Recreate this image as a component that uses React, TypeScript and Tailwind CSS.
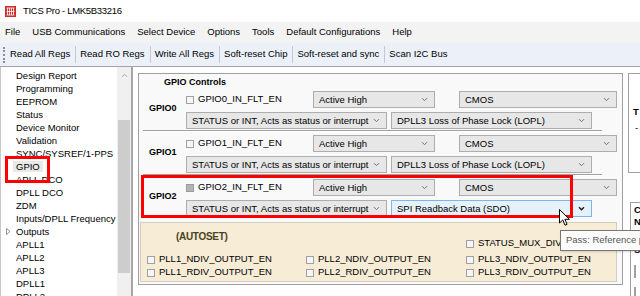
import React from "react";

const Chevron = ({ dark }: { dark?: boolean }) => (
  <svg width="7" height="5" viewBox="0 0 7 5" className="flex-none">
    <path
      d="M1 1.2 L3.5 3.7 L6 1.2"
      fill="none"
      stroke={dark ? "#1a1a1a" : "#707070"}
      strokeWidth={dark ? 1.4 : 1}
    />
  </svg>
);

function Combo({ text, className, hover }: { text: string; className: string; hover?: boolean }) {
  return (
    <div
      className={`${className} h-[17px] flex-none flex items-center justify-between pl-[5px] pr-[6px] border ${
        hover ? "border-[#7eb4ea] bg-[#e5f1fb]" : "border-[#adadad] bg-[#e7e7e7]"
      }`}
    >
      <span className="whitespace-nowrap leading-none">{text}</span>
      <Chevron dark={hover} />
    </div>
  );
}

function Check({ disabled }: { disabled?: boolean }) {
  return (
    <span
      className={`w-[8px] h-[8px] flex-none border ${
        disabled ? "border-[#9c9c9c] bg-[#b3b3b3]" : "border-[#a0a0a0] bg-[#f6f6f6]"
      }`}
    />
  );
}

function GpioGroup({ n, dis, out, hover }: { n: number; dis?: boolean; out: string; hover?: boolean }) {
  return (
    <div className="flex h-[38px]">
      <div className="w-[47px] flex-none flex items-center pl-[10px] pb-[2px] font-bold text-[9px]">GPIO{n}</div>
      <div className="flex flex-col gap-[4px]">
        <div className="flex items-center h-[17px]">
          <div className="w-[127px] flex-none flex items-center gap-[4px]">
            <Check disabled={dis} />
            <span className="whitespace-nowrap">GPIO{n}_IN_FLT_EN</span>
          </div>
          <Combo text="Active High" className="w-[122px]" />
          <Combo text="CMOS" className="w-[158px] ml-[24px]" />
        </div>
        <div className="flex items-center h-[17px]">
          <Combo text="STATUS or INT, Acts as status or interrupt" className="w-[201px]" />
          <Combo text={out} className="w-[201px] ml-[4px]" hover={hover} />
        </div>
      </div>
    </div>
  );
}

const Sep = () => (
  <div className="ml-[4px] w-[459px] h-[2px] border-t border-b border-t-[#a0a0a0] border-b-white mt-[1px] mb-[3px]" />
);

function CheckItem({ label }: { label: string }) {
  return (
    <div className="flex items-center gap-[4px] h-[13px] whitespace-nowrap">
      <Check />
      <span>{label}</span>
    </div>
  );
}

const treeItems = [
  "Design Report",
  "Programming",
  "EEPROM",
  "Status",
  "Device Monitor",
  "Validation",
  "SYNC/SYSREF/1-PPS",
  "GPIO",
  "APLL DCO",
  "DPLL DCO",
  "ZDM",
  "Inputs/DPLL Frequency",
  "Outputs",
  "APLL1",
  "APLL2",
  "APLL3",
  "DPLL1",
  "DPLL2",
];

const menus = ["File", "USB Communications", "Select Device", "Options", "Tools", "Default Configurations", "Help"];
const tools = ["Read All Regs", "Read RO Regs", "Write All Regs", "Soft-reset Chip", "Soft-reset and sync", "Scan I2C Bus"];

export default function App() {
  return (
    <div className="relative w-[640px] h-[296px] overflow-hidden bg-white text-black text-[9.5px] font-['Liberation_Sans',Arial,sans-serif] flex flex-col">
      {/* Title bar */}
      <div className="h-[22px] flex-none flex items-center pl-[5px] gap-[7px]">
        <svg width="11" height="11" viewBox="0 0 11 11" className="flex-none">
          <rect width="11" height="11" fill="#d12a2a" />
          <path d="M1.5 2 H9.5 M1.5 5.5 H9.5 M1.5 9 H9.5" stroke="#fff" strokeWidth="0.8" />
          <path d="M2.5 2 V9 M4.5 2 V9 M6.5 2 V9 M8.5 2 V9" stroke="#fff" strokeWidth="0.8" />
        </svg>
        <span className="text-[9.5px] tracking-[-0.3px] whitespace-nowrap">TICS Pro - LMK5B33216</span>
      </div>

      {/* Menu bar */}
      <div className="h-[21px] flex-none flex items-center pl-[5px] gap-[12px] bg-[#f3f3f3]">
        {menus.map((m) => (
          <span key={m} className="whitespace-nowrap">
            {m}
          </span>
        ))}
      </div>

      {/* Toolbar */}
      <div className="h-[24px] flex-none flex items-center pl-[3px] bg-[#ecf1f9] border-b border-[#a3a3a3]">
        <div className="w-[2px] h-[16px] border-l-2 border-dotted border-[#8f8f8f] mr-[1px]" />
        {tools.map((t, i) => (
          <React.Fragment key={t}>
            <span className="px-[4px] whitespace-nowrap">{t}</span>
            {i < tools.length - 1 && <div className="w-px h-[17px] bg-[#c4c8ce] ml-[1px]" />}
          </React.Fragment>
        ))}
      </div>

      {/* Body */}
      <div className="flex-1 min-h-0 flex">
        {/* Left tree */}
        <div className="w-[133px] flex-none flex border-r-2 border-[#a6a6a6] border-l border-l-[#c8c8c8]">
          <div className="flex-1 bg-white pt-[2px]">
            {treeItems.map((t) =>
              t === "Outputs" ? (
                <div key={t} className="h-[13px] leading-[13px] flex items-center pl-[4px] whitespace-nowrap">
                  <svg width="11" height="7" viewBox="0 0 11 7" className="flex-none">
                    <path d="M1.5 0.5 L5 3.5 L1.5 6.5 Z" fill="none" stroke="#8a8a8a" strokeWidth="0.9" />
                  </svg>
                  <span>{t}</span>
                </div>
              ) : (
                <div key={t} className="h-[13px] leading-[13px] pl-[15px] whitespace-nowrap">
                  {t === "GPIO" ? <span className="-ml-[3px] px-[3px] bg-[#e9e9e9]">{t}</span> : t}
                </div>
              )
            )}
          </div>
          <div className="w-[14px] flex-none bg-[#f0f0f0] flex flex-col">
            <div className="h-[17px] flex items-center justify-center">
              <svg width="7" height="5" viewBox="0 0 7 5">
                <path d="M1 3.8 L3.5 1.3 L6 3.8" fill="none" stroke="#a3a3a3" strokeWidth="1" />
              </svg>
            </div>
            <div className="h-[36px]" />
            <div className="h-[153px] mx-[1px] bg-[#cdcdcd]" />
          </div>
        </div>

        {/* Main area */}
        <div className="flex-1 min-w-0 flex pl-[5px] pt-[6px] bg-white">
          <div className="w-[485px] h-[212px] flex-none border border-[#a0a0a0] bg-[#f9f9f9] pt-[2px] flex flex-col">
            <div className="h-[12px] leading-[12px] pl-[25px] font-bold text-[9px]">GPIO Controls</div>
            <div className="mt-[3px]">
              <GpioGroup n={0} out="DPLL3 Loss of Phase Lock (LOPL)" />
              <Sep />
              <GpioGroup n={1} out="DPLL3 Loss of Phase Lock (LOPL)" />
              <Sep />
              <GpioGroup n={2} dis out="SPI Readback Data (SDO)" hover />
            </div>
            <div className="mt-[5px] ml-[1px] w-[477px] h-[60px] border border-[#d2cdc2] bg-[#f7ecd6] pl-[6px] grid grid-cols-[159px_160px_1fr] grid-rows-[30px_13px_13px]">
              <div className="pl-[29px] pt-[8px] leading-[12px] font-bold text-[10px] tracking-[-0.3px] text-[#4a4520]">
                (AUTOSET)
              </div>
              <div />
              <div className="self-end mb-[3px]">
                <CheckItem label="STATUS_MUX_DIV_EN" />
              </div>
              <CheckItem label="PLL1_NDIV_OUTPUT_EN" />
              <CheckItem label="PLL2_NDIV_OUTPUT_EN" />
              <CheckItem label="PLL3_NDIV_OUTPUT_EN" />
              <CheckItem label="PLL1_RDIV_OUTPUT_EN" />
              <CheckItem label="PLL2_RDIV_OUTPUT_EN" />
              <CheckItem label="PLL3_RDIV_OUTPUT_EN" />
            </div>
          </div>

          {/* Right column */}
          <div className="w-[40px] flex-none ml-[5px] flex flex-col">
            <div className="h-[100px] flex-none border border-[#a0a0a0] bg-white pl-[4px] pt-[32px]">
              <div className="font-bold leading-[12px]">T</div>
              <div className="leading-[12px] pl-[2px] mt-[4px]">-</div>
            </div>
            <div className="mt-[29px] ml-[2px] flex-1 border border-[#a0a0a0] bg-white pl-[3px] pt-[1px]">
              <div className="font-bold leading-[12px]">C</div>
              <div className="font-bold leading-[12px]">N</div>
              <div className="font-bold leading-[12px] mt-[16px]">S</div>
              <div className="mt-[9px]">
                <Check />
              </div>
              <div className="mt-[8px]">
                <Check />
              </div>
            </div>
          </div>
        </div>
      </div>

      {/* Red annotation rectangles */}
      <div className="absolute left-[5px] top-[156px] w-[45px] h-[27px] border-[3px] border-[#ff0000]" />
      <div className="absolute left-[141px] top-[175px] w-[432px] h-[43px] border-[3px] border-[#ff0000]" />

      {/* Tooltip */}
      <div className="absolute left-[560px] top-[230px] h-[21px] flex items-center px-[5px] border border-[#767676] bg-[#fcfcfc] text-[#575757] whitespace-nowrap shadow-[1px_1px_2px_rgba(0,0,0,0.15)]">
        Pass: Reference path valid
      </div>

      {/* Mouse cursor */}
      <svg width="12" height="18" viewBox="0 0 12 18" className="absolute left-[559px] top-[209px]">
        <path
          d="M0.5 0.5 L0.5 14 L3.8 10.9 L6 16.2 L8.1 15.3 L5.9 10.3 L10.4 10.3 Z"
          fill="#fff"
          stroke="#000"
          strokeWidth="1"
          strokeLinejoin="round"
        />
      </svg>
    </div>
  );
}
